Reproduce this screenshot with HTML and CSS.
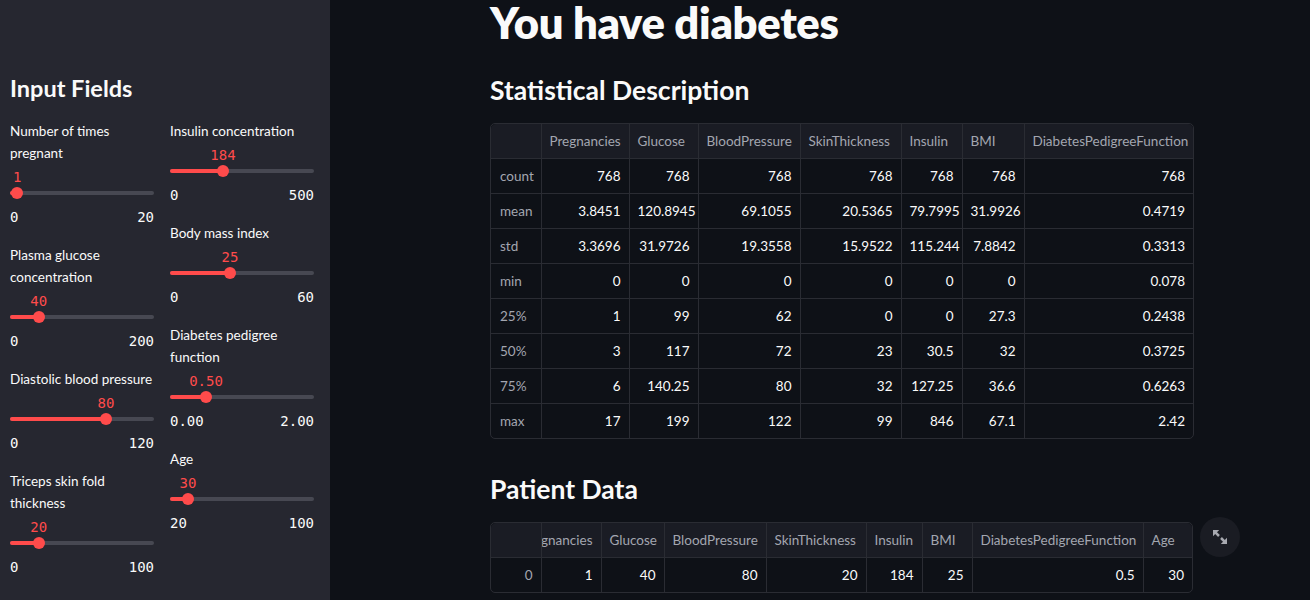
FILE: index.html
```html
<!DOCTYPE html>
<html lang="en">
<head>
<meta charset="utf-8">
<title>Diabetes Prediction</title>
<link rel="stylesheet" href="styles.css">
</head>
<body>
<div class="app">
  <aside class="sidebar">
    <h2 class="side-title">Input Fields</h2>
    <div class="cols">
      <div class="col">
        <div class="slider">
          <div class="label">Number of times pregnant</div>
          <div class="track-wrap">
            <div class="track"><div class="fill" style="width:5%"></div></div>
            <div class="thumb" style="left:5%"><span class="val">1</span></div>
          </div>
          <div class="range"><span>0</span><span>20</span></div>
        </div>
        <div class="slider">
          <div class="label">Plasma glucose concentration</div>
          <div class="track-wrap">
            <div class="track"><div class="fill" style="width:20%"></div></div>
            <div class="thumb" style="left:20%"><span class="val">40</span></div>
          </div>
          <div class="range"><span>0</span><span>200</span></div>
        </div>
        <div class="slider">
          <div class="label">Diastolic blood pressure</div>
          <div class="track-wrap">
            <div class="track"><div class="fill" style="width:66.67%"></div></div>
            <div class="thumb" style="left:66.67%"><span class="val">80</span></div>
          </div>
          <div class="range"><span>0</span><span>120</span></div>
        </div>
        <div class="slider">
          <div class="label">Triceps skin fold thickness</div>
          <div class="track-wrap">
            <div class="track"><div class="fill" style="width:20%"></div></div>
            <div class="thumb" style="left:20%"><span class="val">20</span></div>
          </div>
          <div class="range"><span>0</span><span>100</span></div>
        </div>
      </div>
      <div class="col">
        <div class="slider">
          <div class="label">Insulin concentration</div>
          <div class="track-wrap">
            <div class="track"><div class="fill" style="width:36.8%"></div></div>
            <div class="thumb" style="left:36.8%"><span class="val">184</span></div>
          </div>
          <div class="range"><span>0</span><span>500</span></div>
        </div>
        <div class="slider">
          <div class="label">Body mass index</div>
          <div class="track-wrap">
            <div class="track"><div class="fill" style="width:41.67%"></div></div>
            <div class="thumb" style="left:41.67%"><span class="val">25</span></div>
          </div>
          <div class="range"><span>0</span><span>60</span></div>
        </div>
        <div class="slider">
          <div class="label">Diabetes pedigree function</div>
          <div class="track-wrap">
            <div class="track"><div class="fill" style="width:25%"></div></div>
            <div class="thumb" style="left:25%"><span class="val">0.50</span></div>
          </div>
          <div class="range"><span>0.00</span><span>2.00</span></div>
        </div>
        <div class="slider">
          <div class="label">Age</div>
          <div class="track-wrap">
            <div class="track"><div class="fill" style="width:12.5%"></div></div>
            <div class="thumb" style="left:12.5%"><span class="val">30</span></div>
          </div>
          <div class="range"><span>20</span><span>100</span></div>
        </div>
      </div>
    </div>
  </aside>

  <main class="main">
    <div class="content">
      <h1 class="title">You have diabetes</h1>

      <h2 class="section">Statistical Description</h2>
      <div class="df">
        <table class="grid">
          <colgroup>
            <col class="w50"><col class="w88"><col class="w69"><col class="w102"><col class="w101"><col class="w61"><col class="w62"><col class="w169">
          </colgroup>
          <thead>
            <tr><th></th><th>Pregnancies</th><th>Glucose</th><th>BloodPressure</th><th>SkinThickness</th><th>Insulin</th><th>BMI</th><th>DiabetesPedigreeFunction</th></tr>
          </thead>
          <tbody>
            <tr><td class="idx">count</td><td>768</td><td>768</td><td>768</td><td>768</td><td>768</td><td>768</td><td>768</td></tr>
            <tr><td class="idx">mean</td><td>3.8451</td><td>120.8945</td><td>69.1055</td><td>20.5365</td><td>79.7995</td><td>31.9926</td><td>0.4719</td></tr>
            <tr><td class="idx">std</td><td>3.3696</td><td>31.9726</td><td>19.3558</td><td>15.9522</td><td>115.244</td><td>7.8842</td><td>0.3313</td></tr>
            <tr><td class="idx">min</td><td>0</td><td>0</td><td>0</td><td>0</td><td>0</td><td>0</td><td>0.078</td></tr>
            <tr><td class="idx">25%</td><td>1</td><td>99</td><td>62</td><td>0</td><td>0</td><td>27.3</td><td>0.2438</td></tr>
            <tr><td class="idx">50%</td><td>3</td><td>117</td><td>72</td><td>23</td><td>30.5</td><td>32</td><td>0.3725</td></tr>
            <tr><td class="idx">75%</td><td>6</td><td>140.25</td><td>80</td><td>32</td><td>127.25</td><td>36.6</td><td>0.6263</td></tr>
            <tr><td class="idx">max</td><td>17</td><td>199</td><td>122</td><td>99</td><td>846</td><td>67.1</td><td>2.42</td></tr>
          </tbody>
        </table>
      </div>

      <h2 class="section section-2">Patient Data</h2>
      <div class="df df-small">
        <table class="grid">
          <colgroup>
            <col class="w50"><col class="w60"><col class="w63"><col class="w102"><col class="w100"><col class="w56"><col class="w50b"><col class="w171"><col class="w49">
          </colgroup>
          <thead>
            <tr><th></th><th class="clip"><div class="clip-in">Pregnancies</div></th><th>Glucose</th><th>BloodPressure</th><th>SkinThickness</th><th>Insulin</th><th>BMI</th><th>DiabetesPedigreeFunction</th><th>Age</th></tr>
          </thead>
          <tbody>
            <tr><td class="idx idx-r">0</td><td>1</td><td>40</td><td>80</td><td>20</td><td>184</td><td>25</td><td>0.5</td><td>30</td></tr>
          </tbody>
        </table>
        <button class="expand" type="button" aria-label="Fullscreen">
          <svg width="18" height="18" viewBox="0 0 18 18" aria-hidden="true">
            <path d="M2 2h6.2L6 4.2l2.9 2.9-1.8 1.8L4.2 6 2 8.2z" fill="currentColor"/>
            <path d="M16 16H9.8l2.2-2.2-2.9-2.9 1.8-1.8 2.9 2.9 2.2-2.2z" fill="currentColor"/>
          </svg>
        </button>
      </div>
    </div>
  </main>
</div>
</body>
</html>
```

FILE: styles.css
```css
* { box-sizing: border-box; }

html, body {
  margin: 0;
  padding: 0;
  height: 100%;
  overflow: hidden;
}

body {
  background: #0e1117;
  color: #fafafa;
  font-family: Lato, "Noto Sans", sans-serif;
}

.app {
  display: flex;
  height: 600px;
}

/* ---------- Sidebar ---------- */
.sidebar {
  width: 330px;
  flex: 0 0 330px;
  background: #262730;
  padding: 72px 16px 0 10px;
}

.side-title {
  margin: 0;
  font-size: 23.5px;
  line-height: 32px;
  font-weight: 700;
}

.cols {
  display: flex;
  gap: 16px;
  margin-top: 16px;
}

.col {
  flex: 1 1 0;
  display: flex;
  flex-direction: column;
  gap: 16px;
}

.slider {
  display: flex;
  flex-direction: column;
}

.label {
  font-size: 13.5px;
  line-height: 22px;
  color: #fafafa;
}

.track-wrap {
  position: relative;
  height: 12px;
  margin-top: 23px;
}

.track {
  position: absolute;
  left: 0;
  right: 0;
  top: 4px;
  height: 4px;
  border-radius: 2px;
  background: #474852;
  overflow: hidden;
}

.fill {
  height: 100%;
  background: #ff4b4b;
}

.thumb {
  position: absolute;
  top: 0;
  width: 12px;
  height: 12px;
  margin-left: -6px;
  border-radius: 50%;
  background: #ff4b4b;
}

.val {
  position: absolute;
  left: 50%;
  bottom: 11px;
  transform: translateX(-50%);
  font-family: "DejaVu Sans Mono", monospace;
  font-size: 14px;
  line-height: 22px;
  color: #ff4b4b;
  white-space: nowrap;
}

.range {
  display: flex;
  justify-content: space-between;
  margin-top: 7px;
  font-family: "DejaVu Sans Mono", monospace;
  font-size: 14px;
  line-height: 22px;
  color: #fafafa;
}

/* ---------- Main ---------- */
.main {
  flex: 1 1 auto;
  padding-left: 160px;
}

.content {
  width: 704px;
}

.title {
  margin: 0;
  font-size: 43.5px;
  line-height: 44px;
  font-weight: 800;
  letter-spacing: -0.3px;
}

.section {
  margin: 28px 0 15px;
  font-size: 26.5px;
  line-height: 36px;
  font-weight: 700;
}

.section-2 {
  margin-top: 32px;
}

.df {
  position: relative;
  border: 1px solid #2a2c33;
  border-radius: 5px;
  width: 704px;
}

.df-small {
  width: 703px;
}

.grid {
  width: 100%;
  border-collapse: collapse;
  table-layout: fixed;
  font-size: 13.5px;
  border-radius: 5px;
  overflow: hidden;
}

.grid th,
.grid td {
  height: 35px;
  padding: 0 8px;
  border-left: 1px solid #2a2c33;
  border-top: 1px solid #2a2c33;
  white-space: nowrap;
  overflow: hidden;
}

.grid tr > :first-child { border-left: none; }
.grid thead tr > * { border-top: none; height: 34px; }

.grid th {
  background: #1a1c24;
  color: #a3a6b0;
  font-weight: 400;
  text-align: left;
}

.grid td {
  text-align: right;
  color: #fafafa;
}

.grid td.idx {
  text-align: left;
  color: #a3a6b0;
  padding-left: 9px;
}

.grid td.idx-r {
  text-align: right;
}

.grid th.clip {
  padding-left: 0;
}

.clip-in {
  display: flex;
  justify-content: flex-end;
  overflow: hidden;
  white-space: nowrap;
}

.w50 { width: 50px; }
.w88 { width: 88px; }
.w69 { width: 69px; }
.w102 { width: 102px; }
.w101 { width: 101px; }
.w61 { width: 61px; }
.w62 { width: 62px; }
.w169 { width: 169px; }
.w60 { width: 60px; }
.w63 { width: 63px; }
.w100 { width: 100px; }
.w56 { width: 56px; }
.w50b { width: 50px; }
.w171 { width: 171px; }
.w49 { width: 49px; }

.expand {
  position: absolute;
  left: calc(100% + 8px);
  top: -6px;
  width: 40px;
  height: 40px;
  border: none;
  border-radius: 50%;
  background: #1a1c23;
  color: #a7a9b0;
  display: flex;
  align-items: center;
  justify-content: center;
  padding: 0;
}
```
